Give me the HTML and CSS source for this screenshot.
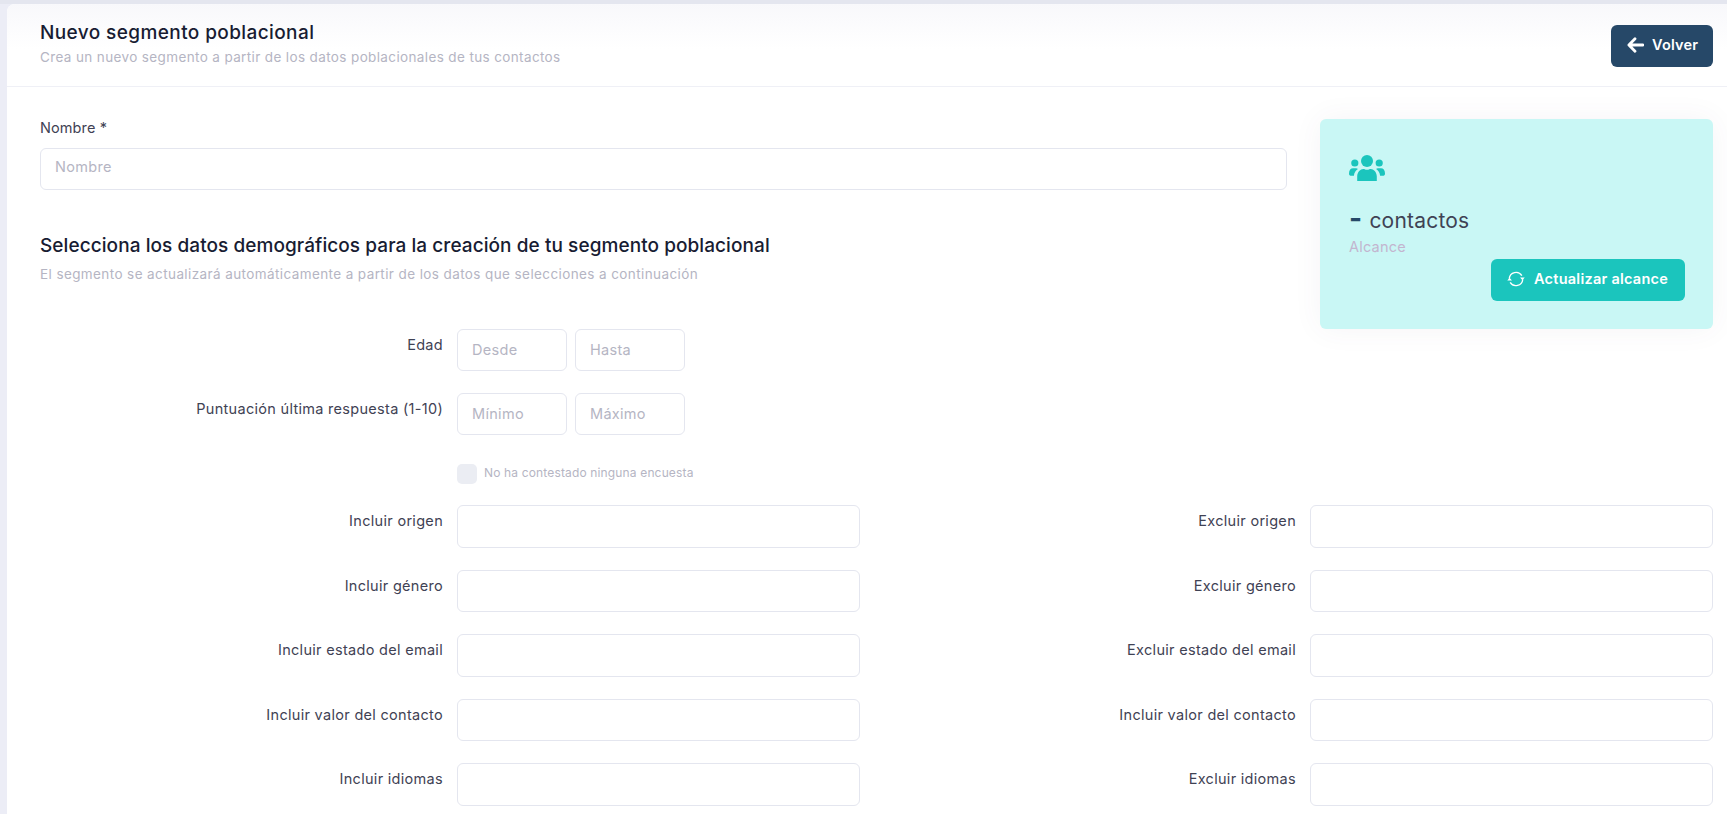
FILE: index.html
```html
<!DOCTYPE html>
<html>
<head>
    <title>Nuevo segmento poblacional</title>
    <link rel="stylesheet" href="styles.css">
</head>
<body>
    <div class="card">
        <div class="card-header">
            <div>
                <h1>Nuevo segmento poblacional</h1>
                <p class="header-sub">Crea un nuevo segmento a partir de los datos poblacionales de tus contactos</p>
            </div>
            <button class="btn-back">
                <svg class="icon-arrow" viewBox="0 0 17 16"><path d="M8 1.700 1.900 8 8 14.300M2.500 8H16" fill="none" stroke="currentColor" stroke-width="2.800" stroke-linecap="round" stroke-linejoin="round"/></svg>
                Volver
            </button>
        </div>
        <div class="card-body">
            <div class="top-row">
                <div class="top-left">
                    <label class="name-label" for="nombre">Nombre *</label>
                    <input class="field name-input" type="text" id="nombre" placeholder="Nombre">
                    <h2>Selecciona los datos demográficos para la creación de tu segmento poblacional</h2>
                    <p class="section-sub">El segmento se actualizará automáticamente a partir de los datos que selecciones a continuación</p>

                    <div class="range-row">
                        <label class="row-label">Edad</label>
                        <input class="field small" type="text" placeholder="Desde">
                        <input class="field small" type="text" placeholder="Hasta">
                    </div>
                    <div class="range-row">
                        <label class="row-label">Puntuación última respuesta (1-10)</label>
                        <input class="field small" type="text" placeholder="Mínimo">
                        <input class="field small" type="text" placeholder="Máximo">
                    </div>
                    <div class="check-row">
                        <span class="check-box"></span>
                        <span class="check-text">No ha contestado ninguna encuesta</span>
                    </div>
                </div>
                <div class="reach-card">
                    <svg class="icon-users" viewBox="0 0 36 26">
                        <circle cx="18" cy="6" r="6" fill="currentColor"/>
                        <circle cx="5.800" cy="8" r="3.600" fill="currentColor"/>
                        <circle cx="30.200" cy="8" r="3.600" fill="currentColor"/>
                        <path d="M8.200 26v-4.500c0-4.600 3.400-7.500 6-7.500 1.500 0 2.200.8 3.800.8s2.300-.8 3.800-.8c2.600 0 6 2.900 6 7.500V26z" fill="currentColor"/>
                        <path d="M0 18.500c0-3.500 1.800-5.200 4-5.200h3c.8 0 1.400.2 1.900.6-2.200 1.300-3.700 3.600-4 6.800H1.500C.6 20.700 0 19.800 0 18.500z" fill="currentColor"/>
                        <path d="M36 18.500c0-3.500-1.800-5.200-4-5.200h-3c-.8 0-1.400.2-1.900.6 2.200 1.300 3.700 3.600 4 6.800h3.400c.9 0 1.500-.9 1.500-2.200z" fill="currentColor"/>
                    </svg>
                    <div class="reach-count"><b>-</b> contactos</div>
                    <div class="reach-label">Alcance</div>
                    <button class="btn-update">
                        <svg class="icon-sync" viewBox="0 0 20 20">
                            <path d="M2.500 9.500A7.600 7.600 0 0 1 16.500 6.200M17.500 10.500A7.600 7.600 0 0 1 3.500 13.800" fill="none" stroke="currentColor" stroke-width="1.500"/>
                            <path d="M14.500 8.300H19.700L17.100 11.500zM5.500 11.700H.3L2.900 8.500z" fill="currentColor"/>
                        </svg>
                        Actualizar alcance
                    </button>
                </div>
            </div>

            <div class="demo-grid">
                <label class="row-label">Incluir origen</label>
                <input class="field" type="text">
                <label class="row-label">Excluir origen</label>
                <input class="field" type="text">

                <label class="row-label">Incluir género</label>
                <input class="field" type="text">
                <label class="row-label">Excluir género</label>
                <input class="field" type="text">

                <label class="row-label">Incluir estado del email</label>
                <input class="field" type="text">
                <label class="row-label">Excluir estado del email</label>
                <input class="field" type="text">

                <label class="row-label">Incluir valor del contacto</label>
                <input class="field" type="text">
                <label class="row-label">Incluir valor del contacto</label>
                <input class="field" type="text">

                <label class="row-label">Incluir idiomas</label>
                <input class="field" type="text">
                <label class="row-label">Excluir idiomas</label>
                <input class="field" type="text">
            </div>
        </div>
    </div>
</body>
</html>
```

FILE: styles.css
```css
html, body {
    height: 100%;
    overflow: hidden;
}
body {
    margin: 0;
    padding: 0 0 0 7px;
    box-sizing: border-box;
    font-family: Inter, "Noto Sans", sans-serif;
    background-color: #ecedf6;
    border-top: 4px solid #e4e6ef;
    color: #3f4254;
}
.card {
    background-color: white;
    border-top-left-radius: 8px;
    min-height: 100%;
}
.card-header {
    display: flex;
    justify-content: space-between;
    align-items: flex-start;
    height: 83px;
    box-sizing: border-box;
    padding: 19px 14px 0 33px;
    border-bottom: 1px solid #eff0f6;
    background: linear-gradient(#f8f8fb, white 45px);
    border-top-left-radius: 8px;
}
h1 {
    margin: 0;
    font-size: 19px;
    line-height: 20px;
    font-weight: 500;
    letter-spacing: 0.4px;
    color: #181c32;
}
.header-sub {
    margin: 4px 0 0;
    font-size: 13.5px;
    line-height: 20px;
    letter-spacing: 0.37px;
    color: #b5b5c3;
}
.btn-back {
    display: flex;
    align-items: center;
    gap: 8px;
    width: 102px;
    height: 42px;
    margin-top: 2px;
    padding: 0 0 3px 16px;
    border: none;
    border-radius: 6px;
    background-color: #264868;
    color: white;
    font-family: inherit;
    font-size: 14.5px;
    font-weight: 600;
    letter-spacing: 0.2px;
}
.icon-arrow {
    width: 17px;
    height: 16px;
}
.card-body {
    padding: 31px 14px 0 33px;
}
.top-row {
    display: flex;
    justify-content: space-between;
    align-items: flex-start;
}
.top-left {
    width: 1247px;
}
.field {
    display: block;
    box-sizing: border-box;
    width: 100%;
    height: 42px;
    padding: 0 14px 2px;
    border: 1px solid #e4e6ef;
    border-radius: 6px;
    background-color: white;
    font-family: inherit;
    font-size: 14.5px;
    letter-spacing: 0.3px;
    color: #3f4254;
}
.name-input {
    padding-bottom: 5px;
}
.field::placeholder {
    color: #b5b5c3;
}
.name-label {
    display: block;
    font-size: 14.5px;
    letter-spacing: 0.1px;
    line-height: 20px;
    margin-bottom: 10px;
}
h2 {
    margin: 44px 0 0;
    font-size: 19px;
    line-height: 24px;
    font-weight: 500;
    letter-spacing: 0.07px;
    color: #181c32;
}
.section-sub {
    margin: 6px 0 0;
    font-size: 13.5px;
    line-height: 20px;
    letter-spacing: 0.4px;
    color: #b5b5c3;
}
.range-row {
    display: flex;
    gap: 8px;
    margin-bottom: 22px;
}
.section-sub + .range-row {
    margin-top: 45px;
}
.row-label {
    font-size: 14.5px;
    letter-spacing: 0.3px;
    line-height: 20px;
    padding-top: 6px;
    text-align: right;
}
.range-row .row-label {
    width: 403px;
    margin-right: 6px;
}
.field.small {
    width: 110px;
}
.check-row {
    display: flex;
    align-items: center;
    gap: 7px;
    margin: 29px 0 0 417px;
    height: 20px;
}
.check-box {
    width: 20px;
    height: 20px;
    border-radius: 5px;
    background-color: #ebedf3;
}
.check-text {
    padding-bottom: 3px;
    font-size: 12px;
    letter-spacing: 0.15px;
    color: #b5b5c3;
}
.reach-card {
    display: flex;
    flex-direction: column;
    box-sizing: border-box;
    width: 393px;
    height: 210px;
    margin-top: 1px;
    padding: 36px 28px 0 29px;
    border-radius: 6px;
    background-color: #c9f7f5;
    box-shadow: 0 0 30px rgba(82, 63, 105, 0.06);
}
.icon-users {
    width: 36px;
    height: 26px;
    color: #1bc5bd;
}
.reach-count {
    margin-top: 27px;
    font-size: 21px;
    letter-spacing: 0.2px;
    line-height: 26px;
    color: #3f4254;
}
.reach-count b {
    color: #264868;
    font-size: 28px;
    line-height: 0;
    margin-right: 1px;
}
.reach-label {
    margin-top: 3px;
    font-size: 14.5px;
    letter-spacing: 0.2px;
    line-height: 20px;
    color: #c3b5cf;
}
.btn-update {
    display: flex;
    align-items: center;
    gap: 9px;
    align-self: flex-end;
    width: 194px;
    height: 42px;
    margin-top: 2px;
    padding: 0 0 3px 16px;
    border: none;
    border-radius: 6px;
    background-color: #1bc5bd;
    color: white;
    font-family: inherit;
    font-size: 14.5px;
    font-weight: 600;
    letter-spacing: 0.25px;
}
.icon-sync {
    width: 18px;
    height: 18px;
}
.demo-grid {
    display: grid;
    grid-template-columns: 403px 403px 422px 403px;
    column-gap: 14px;
    row-gap: 22px;
    margin-top: 21px;
}
.demo-grid .field {
    height: 42.5px;
}
```
